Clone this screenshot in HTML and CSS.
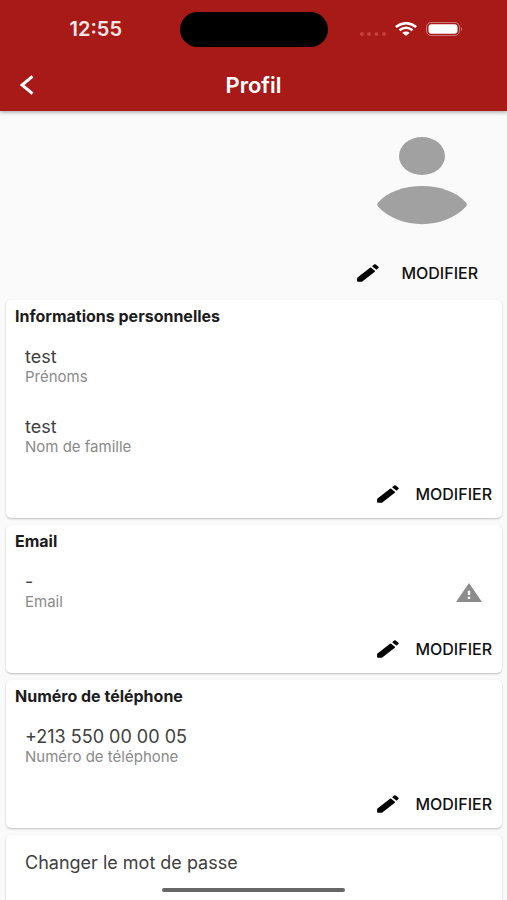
FILE: index.html
```html
<!DOCTYPE html>
<html lang="fr">
<head>
<meta charset="utf-8">
<meta name="viewport" content="width=device-width, initial-scale=1">
<title>Profil</title>
<link rel="stylesheet" href="styles.css">
</head>
<body>
<svg class="symbols" aria-hidden="true">
  <symbol id="pencil" viewBox="0 0 22 18" preserveAspectRatio="none">
    <path d="M0.500 13.500 L13 3.700 Q13.600 3.300 14.200 3.700 L17.900 6.700 Q18.400 7.200 17.800 7.700 L5.600 17.300 Q5 17.800 4.200 17.800 H1 Q0.100 17.800 0.100 17 V14.300 Q0.100 13.800 0.500 13.500Z"/>
    <path d="M15.100 2.200 L17.100 0.600 Q18 0 18.900 0.600 L21.400 2.700 Q22.200 3.400 21.400 4.100 L19.500 5.700Z"/>
  </symbol>
</svg>
<div class="screen">
  <header class="header">
    <div class="status">
      <time class="clock">12:55</time>
      <div class="island"></div>
      <div class="indicators">
        <svg class="signal" viewBox="0 0 26 4" aria-hidden="true">
          <circle cx="2" cy="2" r="2"/><circle cx="9" cy="2" r="2"/><circle cx="16.500" cy="2" r="2"/><circle cx="24" cy="2" r="2"/>
        </svg>
        <svg class="wifi" viewBox="0 0 22 14" aria-hidden="true">
          <path d="M0.800 5 Q11 -2.600 21.200 5M4.500 8.300 Q11 3.200 17.500 8.300" fill="none" stroke="#fff" stroke-width="2.600"/>
          <path d="M7.300 10.700 Q11 8.200 14.700 10.700 L11.600 13.400 Q11 13.800 10.400 13.400Z" fill="#fff"/>
        </svg>
        <svg class="battery" viewBox="0 0 37 14" aria-hidden="true">
          <rect x="0.500" y="0.500" width="33" height="13" rx="4.500" fill="none" stroke="#fff" stroke-opacity=".4"/>
          <rect x="2.500" y="2.300" width="29" height="9.400" rx="3" fill="#fff"/>
          <path d="M35 5 Q37 7 35 9Z" fill="#fff" fill-opacity=".5"/>
        </svg>
      </div>
    </div>
    <div class="appbar">
      <button class="back" type="button" aria-label="Retour">
        <svg viewBox="0 0 14 20" aria-hidden="true"><path d="M12.500 1.300 L2 10 L12.500 18.700"/></svg>
      </button>
      <h1>Profil</h1>
    </div>
  </header>
  <main>
    <section class="photo">
      <svg class="avatar" viewBox="0 0 90 88" role="img" aria-label="Photo de profil">
        <ellipse cx="45" cy="19" rx="23" ry="19"/>
        <path d="M1 65.500 C20 43.500 70 43.500 89 65.500 Q90.500 67.500 89 69.500 C67 93 23 93 1 69.500 Q-0.500 67.500 1 65.500Z"/>
      </svg>
      <button class="edit" type="button"><svg aria-hidden="true"><use href="#pencil"/></svg>MODIFIER</button>
    </section>
    <section class="card">
      <h2>Informations personnelles</h2>
      <div class="field"><p class="value">test</p><p class="label">Prénoms</p></div>
      <div class="field"><p class="value">test</p><p class="label">Nom de famille</p></div>
      <button class="edit" type="button"><svg aria-hidden="true"><use href="#pencil"/></svg>MODIFIER</button>
    </section>
    <section class="card">
      <h2>Email</h2>
      <div class="field with-icon">
        <div><p class="value">-</p><p class="label">Email</p></div>
        <svg class="warning" viewBox="0 0 26 19" role="img" aria-label="Attention">
          <path fill-rule="evenodd" d="M13 0 L26 19 H0Z M11.800 7.800 V12 H14.200 V7.800Z M11.800 13.800 V16 H14.200 V13.800Z"/>
        </svg>
      </div>
      <button class="edit" type="button"><svg aria-hidden="true"><use href="#pencil"/></svg>MODIFIER</button>
    </section>
    <section class="card">
      <h2>Numéro de téléphone</h2>
      <div class="field"><p class="value">+213 550 00 00 05</p><p class="label">Numéro de téléphone</p></div>
      <button class="edit" type="button"><svg aria-hidden="true"><use href="#pencil"/></svg>MODIFIER</button>
    </section>
    <section class="card last">
      <a class="link" href="#">Changer le mot de passe</a>
    </section>
  </main>
  <div class="home"></div>
</div>
</body>
</html>
```

FILE: styles.css
```css
* { box-sizing: border-box; }
body {
  margin: 0;
  background: #fafafa;
  color: #1c1c1c;
  font-family: Inter, "Liberation Sans", sans-serif;
}
h1, h2, p { margin: 0; }
button { border: 0; padding: 0; background: none; font: inherit; color: inherit; cursor: pointer; }
svg { display: block; flex: none; }
.symbols { position: absolute; width: 0; height: 0; }

.screen { display: flex; flex-direction: column; min-height: 100vh; }

.header {
  background: #a81a18;
  color: #fff;
  box-shadow: 0 1px 4px rgba(0, 0, 0, .4);
}
.status {
  display: grid;
  grid-template-columns: 1fr 148px 1fr;
  align-items: center;
  height: 58px;
}
.clock { padding-left: 12px; text-align: center; font-size: 20px; font-weight: 600; color: #fbe9e8; }
.island { height: 35px; border-radius: 18px; background: #000; }
.indicators { display: flex; align-items: center; justify-content: flex-end; gap: 9px; padding-right: 44px; }
.signal { width: 26px; height: 4px; margin-top: 9px; fill: #c5413e; }
.wifi { width: 22px; height: 14px; }
.battery { width: 37px; height: 14px; }

.appbar {
  display: grid;
  grid-template-columns: 54px 1fr 54px;
  align-items: center;
  height: 53px;
}
.back { display: grid; place-items: center; height: 53px; }
.back svg { width: 14px; height: 20px; fill: none; stroke: #fff; stroke-width: 3; }
h1 { text-align: center; font-size: 22px; line-height: 24px; font-weight: 600; }

main { flex: 1; display: flex; flex-direction: column; gap: 7px; padding: 0 5px 0 6px; }

.photo { display: flex; flex-direction: column; align-items: flex-end; padding: 26px 14px 0 0; }
.avatar { width: 90px; height: 88px; margin: 0 21px 28px 0; fill: #a1a1a1; }

.card {
  display: flex;
  flex-direction: column;
  background: #fff;
  border-radius: 5px;
  box-shadow: 0 1px 2px rgba(0, 0, 0, .24);
}
.last { flex: 1; border-radius: 5px 5px 0 0; }
h2 { padding: 6px 9px 4px; font-size: 16px; line-height: 20px; font-weight: 700; }
.field { height: 70px; padding: 17px 20px 13px 19px; }
.with-icon { display: flex; align-items: center; justify-content: space-between; }
.value, .link { font-size: 18px; line-height: 20px; color: #404040; }
.label { font-size: 15px; line-height: 20px; color: #8a8a8a; }
.warning { width: 26px; height: 19px; fill: #8c8c8c; }
.link { padding: 18px 19px; text-decoration: none; }

.edit {
  align-self: flex-end;
  display: flex;
  align-items: center;
  gap: 16px;
  height: 48px;
  padding-right: 10px;
  font-size: 16px;
  font-weight: 500;
  color: #111;
}
.edit svg { width: 22px; height: 18px; fill: #000; }
.photo .edit { gap: 22px; height: 40px; }

.home {
  position: fixed;
  left: 50%;
  bottom: 8px;
  width: 36%;
  height: 4px;
  margin-left: -18%;
  border-radius: 2px;
  background: #666;
}
```
